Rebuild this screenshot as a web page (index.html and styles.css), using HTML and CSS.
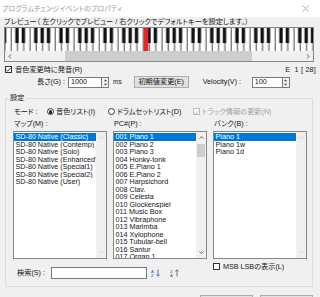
FILE: index.html
```html
<!DOCTYPE html>
<html lang="ja">
<head>
<meta charset="utf-8">
<title>プログラムチェンジイベントのプロパティ</title>
<link rel="stylesheet" href="styles.css">
</head>
<body>
<div class="titlebar">
  <span class="title">プログラムチェンジイベントのプロパティ</span>
  <svg class="close" width="7" height="7" viewBox="0 0 7 7"><path d="M0.5 0.5L6.5 6.5M6.5 0.5L0.5 6.5" stroke="#9a9a9a" stroke-width="0.8" fill="none"/></svg>
</div>
<div class="content">
  <div class="preview-label">プレビュー（ 左クリックでプレビュー / 右クリックでデフォルトキーを設定します。）</div>
  <div class="keyboard-box">
    <svg class="keys" width="308" height="23" viewBox="0 0 308 23">
      <defs>
        <pattern id="oct" x="5.7" y="0" width="44" height="23" patternUnits="userSpaceOnUse">
          <rect width="44" height="23" fill="#ffffff"/>
          <g fill="#333333">
            <rect x="0" width="0.9" height="23"/>
            <rect x="6.29" width="0.9" height="23"/>
            <rect x="12.57" width="0.9" height="23"/>
            <rect x="18.86" width="0.9" height="23"/>
            <rect x="25.14" width="0.9" height="23"/>
            <rect x="31.43" width="0.9" height="23"/>
            <rect x="37.71" width="0.9" height="23"/>
          </g>
          <g fill="#111111">
            <rect x="4.6" width="3.4" height="15"/>
            <rect x="11.0" width="3.4" height="15"/>
            <rect x="23.4" width="3.4" height="15"/>
            <rect x="29.8" width="3.4" height="15"/>
            <rect x="36.1" width="3.4" height="15"/>
          </g>
        </pattern>
      </defs>
      <rect width="308" height="23" fill="url(#oct)"/>
      <rect x="139" y="0" width="4.3" height="23" fill="#ee2424"/>
    </svg>
    <div class="hscroll">
      <span class="sb-btn"><svg width="4" height="5" viewBox="0 0 4 5"><path d="M3 0.5L1 2.5L3 4.5" stroke="#555" stroke-width="0.9" fill="none"/></svg></span>
      <div class="htrack"><div class="hthumb"></div></div>
      <span class="sb-btn"><svg width="4" height="5" viewBox="0 0 4 5"><path d="M1 0.5L3 2.5L1 4.5" stroke="#555" stroke-width="0.9" fill="none"/></svg></span>
    </div>
  </div>

  <div class="row-check">
    <label class="check"><span class="cb"><svg width="7" height="7" viewBox="0 0 7 7"><path d="M1.2 3.6L2.8 5.2L5.9 1.8" stroke="#222" stroke-width="0.9" fill="none"/></svg></span>音色変更時に発音(R)</label>
    <span class="note">E&nbsp;&nbsp;1 [ 28]</span>
  </div>

  <div class="row-len">
    <span class="lbl-len">長さ(G) :</span>
    <span class="input w-len">1000</span>
    <span class="spinner"><svg width="5" height="9" viewBox="0 0 5 9"><path d="M0.8 3.2L2.5 1.5L4.2 3.2Z M0.8 5.8L2.5 7.5L4.2 5.8Z" fill="#444"/></svg></span>
    <span class="ms">ms</span>
    <span class="btn btn-init">初期値変更(E)</span>
    <span class="lbl-vel">Velocity(V) :</span>
    <span class="input w-vel">100</span>
    <span class="spinner"><svg width="5" height="9" viewBox="0 0 5 9"><path d="M0.8 3.2L2.5 1.5L4.2 3.2Z M0.8 5.8L2.5 7.5L4.2 5.8Z" fill="#444"/></svg></span>
  </div>

  <fieldset class="group">
    <legend>設定</legend>
    <div class="mode-row">
      <span class="mode-label">モード :</span>
      <span class="opt opt1"><span class="radio on"></span>音色リスト(I)</span>
      <span class="opt opt2"><span class="radio"></span>ドラムセットリスト(D)</span>
      <span class="opt opt3 disabled"><span class="cb cb-dis"><svg width="7" height="7" viewBox="0 0 7 7"><path d="M1.2 3.6L2.8 5.2L5.9 1.8" stroke="#b0b0b0" stroke-width="0.9" fill="none"/></svg></span>トラック情報の更新(N)</span>
    </div>

    <div class="cols">
      <div class="col-label">マップ(M) :</div>
      <div class="col-label">PC#(P) :</div>
      <div class="col-label">バンク(B) :</div>

      <div class="list">
        <div class="items">
          <div class="item sel">SD-80 Native (Classic)</div>
          <div class="item">SD-80 Native (Contemp)</div>
          <div class="item">SD-80 Native (Solo)</div>
          <div class="item">SD-80 Native (Enhanced)</div>
          <div class="item">SD-80 Native (Special1)</div>
          <div class="item">SD-80 Native (Special2)</div>
          <div class="item">SD-80 Native (User)</div>
        </div>
        <div class="vscroll dis">
          <span class="vbtn"><svg width="5" height="3" viewBox="0 0 5 3"><path d="M0.5 2.6L2.5 0.6L4.5 2.6" stroke="#c4c4c4" stroke-width="0.8" fill="none"/></svg></span>
          <span class="vfill"></span>
          <span class="vbtn"><svg width="5" height="3" viewBox="0 0 5 3"><path d="M0.5 0.4L2.5 2.4L4.5 0.4" stroke="#c4c4c4" stroke-width="0.8" fill="none"/></svg></span>
        </div>
      </div>

      <div class="list">
        <div class="items">
          <div class="item sel">001 Piano 1</div>
          <div class="item">002 Piano 2</div>
          <div class="item">003 Piano 3</div>
          <div class="item">004 Honky-tonk</div>
          <div class="item">005 E.Piano 1</div>
          <div class="item">006 E.Piano 2</div>
          <div class="item">007 Harpsichord</div>
          <div class="item">008 Clav.</div>
          <div class="item">009 Celesta</div>
          <div class="item">010 Glockenspiel</div>
          <div class="item">011 Music Box</div>
          <div class="item">012 Vibraphone</div>
          <div class="item">013 Marimba</div>
          <div class="item">014 Xylophone</div>
          <div class="item">015 Tubular-bell</div>
          <div class="item">016 Santur</div>
          <div class="item">017 Organ 1</div>
        </div>
        <div class="vscroll">
          <span class="vbtn"><svg width="5" height="3" viewBox="0 0 5 3"><path d="M0.5 2.6L2.5 0.6L4.5 2.6" stroke="#555" stroke-width="0.9" fill="none"/></svg></span>
          <span class="vthumb"></span>
          <span class="vfill"></span>
          <span class="vbtn"><svg width="5" height="3" viewBox="0 0 5 3"><path d="M0.5 0.4L2.5 2.4L4.5 0.4" stroke="#555" stroke-width="0.9" fill="none"/></svg></span>
        </div>
      </div>

      <div class="list">
        <div class="items">
          <div class="item sel">Piano 1</div>
          <div class="item">Piano 1w</div>
          <div class="item">Piano 1d</div>
        </div>
        <div class="vscroll dis">
          <span class="vbtn"><svg width="5" height="3" viewBox="0 0 5 3"><path d="M0.5 2.6L2.5 0.6L4.5 2.6" stroke="#c4c4c4" stroke-width="0.8" fill="none"/></svg></span>
          <span class="vfill"></span>
          <span class="vbtn"><svg width="5" height="3" viewBox="0 0 5 3"><path d="M0.5 0.4L2.5 2.4L4.5 0.4" stroke="#c4c4c4" stroke-width="0.8" fill="none"/></svg></span>
        </div>
      </div>

      <div class="search">
        <span class="lbl-search">検索(S) :</span>
        <span class="input w-search"></span>
        <svg class="sort" width="9" height="8" viewBox="0 0 9 8"><text x="0" y="4" font-size="4.2" fill="#2a5db0" font-family="Liberation Sans">A</text><text x="0" y="8" font-size="4.2" fill="#2a5db0" font-family="Liberation Sans">Z</text><path d="M7 0.5V7M5.5 5.5L7 7.2L8.5 5.5" stroke="#2a5db0" stroke-width="0.8" fill="none"/></svg>
        <svg class="sort sort2" width="9" height="8" viewBox="0 0 9 8"><text x="0" y="4" font-size="4.2" fill="#2a5db0" font-family="Liberation Sans">Z</text><text x="0" y="8" font-size="4.2" fill="#2a5db0" font-family="Liberation Sans">A</text><path d="M7 7.5V1M5.5 2.5L7 0.8L8.5 2.5" stroke="#2a5db0" stroke-width="0.8" fill="none"/></svg>
      </div>
      <label class="check msb"><span class="cb"></span>MSB LSBの表示(L)</label>
    </div>
  </fieldset>

  <div class="buttons">
    <span class="btn btn-big"></span>
    <span class="btn btn-big"></span>
  </div>
</div>
</body>
</html>
```

FILE: styles.css
```css
* { box-sizing: border-box; }
html, body { margin: 0; padding: 0; }
body {
  width: 320px;
  height: 297px;
  overflow: hidden;
  background: #f0f0f0;
  color: #151515;
  font-family: "Liberation Sans", "Noto Sans CJK JP", sans-serif;
  font-size: 7.2px;
  font-feature-settings: "palt";
  line-height: 1;
}
.titlebar {
  height: 17px;
  background: #ffffff;
  display: flex;
  align-items: center;
  justify-content: space-between;
  padding: 0 11px 1px 2px;
}
.title { color: #9a9a9a; font-size: 7px; }
.close { display: block; }

.content { padding: 0 6px 0 4px; }
.preview-label { height: 10px; line-height: 10px; white-space: nowrap; }

.keyboard-box {
  width: 310px;
  border: 1px solid #828790;
  background: #fff;
}
.keys { display: block; }
.hscroll { display: flex; height: 10px; background: #f0f0f0; }
.sb-btn { width: 10px; display: flex; align-items: center; justify-content: center; }
.sb-btn svg { display: block; }
.htrack { flex: 1; display: flex; }
.hthumb { margin-left: 50px; width: 187px; background: #cdcdcd; }

.row-check {
  display: flex;
  justify-content: space-between;
  align-items: center;
  height: 11px;
  margin-top: 2px;
}
.check { display: flex; align-items: center; gap: 3px; margin-left: 1px; }
.cb {
  width: 7px; height: 7px;
  border: 0.8px solid #333;
  background: #fff;
  display: flex;
  align-items: center;
  justify-content: center;
  position: relative;
}
.cb svg { display: block; position: absolute; left: -0.8px; top: -0.8px; }
.cb-dis { border-color: #bcbcbc; }
.note { margin-right: -2px; letter-spacing: 0.2px; }

.row-len {
  display: flex;
  align-items: center;
  height: 12px;
  margin-top: 1px;
}
.lbl-len { width: 62px; text-align: right; padding-right: 1px; }
.input {
  height: 11px;
  background: #fff;
  border: 1px solid #7a7a7a;
  display: flex;
  align-items: center;
  padding-left: 2px;
}
.w-len { width: 34px; margin-left: 2px; }
.w-vel { width: 31px; margin-left: 1px; }
.spinner {
  width: 7px; height: 11px;
  background: #f0f0f0;
  border: 1px solid #7a7a7a;
  border-left: none;
  display: flex;
  align-items: center;
  justify-content: center;
}
.spinner svg { display: block; }
.ms { margin-left: 4px; font-size: 6.5px; }
.btn {
  background: #e1e1e1;
  border: 1px solid #adadad;
  display: flex;
  align-items: center;
  justify-content: center;
}
.btn-init { width: 55px; height: 12px; margin-left: 12px; }
.lbl-vel { margin-left: 14px; width: 48px; }

.group {
  margin: 5px 1px 0 1px;
  padding: 0 5px 7px 7px;
  border: 1px solid #dcdcdc;
  min-width: 0;
}
.group legend {
  padding: 0 1px;
  margin-left: -4px;
  height: 10px;
  line-height: 10px;
}
.mode-row {
  display: flex;
  align-items: center;
  height: 10px;
  margin-top: 4px;
}
.mode-label { width: 34px; padding-left: 1px; }
.opt { display: flex; align-items: center; gap: 2px; white-space: nowrap; }
.opt1 { width: 61px; }
.opt2 { width: 85px; }
.disabled { color: #a0a0a0; }
.radio {
  width: 7px; height: 7px;
  border-radius: 50%;
  border: 0.8px solid #333;
  background: #fff;
  display: flex;
  align-items: center;
  justify-content: center;
}
.radio.on::after {
  content: "";
  width: 3.4px; height: 3.4px;
  border-radius: 50%;
  background: #222;
}

.cols {
  display: grid;
  grid-template-columns: 94px 94px 94px;
  column-gap: 6px;
  margin-top: 2px;
}
.col-label { height: 10px; line-height: 10px; padding-left: 1px; }
.list {
  margin-top: 2px;
  height: 128px;
  border: 1px solid #828790;
  background: #fff;
  display: flex;
  overflow: hidden;
}
.items { flex: 1; padding-top: 1px; min-width: 0; }
.item {
  height: 7.5px;
  line-height: 7.5px;
  padding-left: 1.5px;
  white-space: nowrap;
  overflow: hidden;
}
.item.sel { background: #0078d7; color: #fff; }
.vscroll {
  width: 10px;
  background: #f0f0f0;
  display: flex;
  flex-direction: column;
  align-items: center;
}
.vbtn { height: 11px; width: 10px; display: flex; align-items: center; justify-content: center; }
.vbtn svg { display: block; }
.vthumb { width: 8.5px; height: 13px; background: #cdcdcd; margin-top: 1px; }
.vfill { flex: 1; }

.search {
  grid-column: 1 / 3;
  display: flex;
  align-items: center;
  margin-top: 8px;
  height: 12px;
}
.lbl-search { width: 38px; padding-left: 4px; }
.w-search { width: 96px; height: 12px; }
.sort { display: block; margin-left: 4px; }
.sort2 { margin-left: 10px; }
.msb { margin-top: 3px; height: 9px; margin-left: 0; }

.buttons {
  display: flex;
  justify-content: flex-end;
  gap: 7px;
  margin-top: 8px;
  padding-right: 1px;
}
.btn-big { width: 53px; height: 14px; }
```
